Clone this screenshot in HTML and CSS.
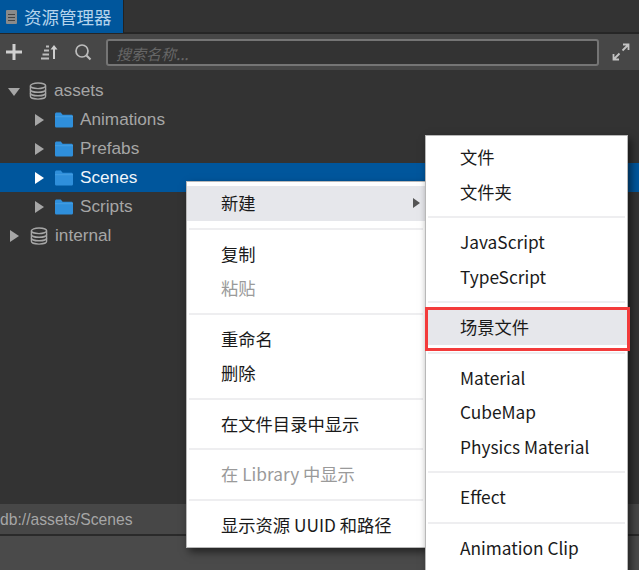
FILE: index.html
```html
<!DOCTYPE html>
<html lang="zh-CN">
<head>
    <meta charset="UTF-8">
    <title>资源管理器</title>
    <link rel="stylesheet" href="styles.css">
</head>
<body>
    <svg class="sprites" width="0" height="0">
        <symbol id="db" viewBox="0 0 18 18">
            <g fill="none" stroke="currentColor" stroke-width="1.4">
                <ellipse cx="9" cy="3.8" rx="7.6" ry="2.8"/>
                <path d="M1.4 3.8v10.4c0 1.6 3.4 2.9 7.6 2.9s7.6-1.3 7.6-2.9V3.8"/>
                <path d="M1.4 7.4c0 1.6 3.4 2.9 7.6 2.9s7.6-1.3 7.6-2.9"/>
                <path d="M1.4 10.9c0 1.6 3.4 2.9 7.6 2.9s7.6-1.3 7.6-2.9"/>
            </g>
        </symbol>
        <symbol id="folder" viewBox="0 0 18 16">
            <path fill="#2f8fdb" d="M0 2.2C0 1.2.7.5 1.6.5h4.2l1.8 2.2h8.8c.9 0 1.6.7 1.6 1.6v9.6c0 .9-.7 1.6-1.6 1.6H1.6C.7 15.5 0 14.8 0 13.900z"/>
            <path fill="#5aaee8" d="M0 4.300h18v.9H0z" opacity=".6"/>
        </symbol>
    </svg>

    <div class="panel">
        <div class="tabs">
            <div class="tab">
                <svg class="tab-icon" width="11" height="14" viewBox="0 0 11 14">
                    <path fill="#8a8a8a" d="M1 0h9a1 1 0 0 1 1 1v12a1 1 0 0 1-1 1H1a1 1 0 0 1-1-1V1a1 1 0 0 1 1-1z"/>
                    <path stroke="#444" stroke-width="1" d="M2 4.500h7M2 7.500h7M2 10.500h7"/>
                </svg>
                <span>资源管理器</span>
            </div>
        </div>

        <div class="toolbar">
            <svg class="tool" width="18" height="18" viewBox="0 0 18 18">
                <path stroke="#cfcfcf" stroke-width="3" d="M9 1v16M1 9h16"/>
            </svg>
            <svg class="tool" width="18" height="18" viewBox="0 0 18 18">
                <path stroke="#bdbdbd" stroke-width="2" d="M6 3.500h3M4 7.500h5M2.500 11.500h6.500M1 15.500h8"/>
                <path fill="#cfcfcf" d="M14 2l3.500 4.500H15V16h-2V6.500h-2.500z"/>
            </svg>
            <svg class="tool" width="18" height="18" viewBox="0 0 18 18">
                <circle cx="8" cy="8" r="6" fill="none" stroke="#bdbdbd" stroke-width="1.700"/>
                <path stroke="#bdbdbd" stroke-width="2.200" d="M12.500 12.500l4 4"/>
            </svg>
            <div class="search">搜索名称...</div>
            <svg class="expand" width="18" height="18" viewBox="0 0 18 18">
                <path fill="none" stroke="#c4c4c4" stroke-width="1.800" d="M10.500 7.500L16 2M11 1.500h5.500V7M7.500 10.500L2 16M1.500 11v5.500H7"/>
            </svg>
        </div>

        <ul class="tree">
            <li class="node">
                <i class="caret caret-open"></i>
                <svg class="db-icon"><use href="#db"/></svg>
                <span>assets</span>
            </li>
            <li class="node child">
                <i class="caret"></i>
                <svg class="folder-icon"><use href="#folder"/></svg>
                <span>Animations</span>
            </li>
            <li class="node child">
                <i class="caret"></i>
                <svg class="folder-icon"><use href="#folder"/></svg>
                <span>Prefabs</span>
            </li>
            <li class="node child selected">
                <i class="caret"></i>
                <svg class="folder-icon"><use href="#folder"/></svg>
                <span>Scenes</span>
            </li>
            <li class="node child">
                <i class="caret"></i>
                <svg class="folder-icon"><use href="#folder"/></svg>
                <span>Scripts</span>
            </li>
            <li class="node closed-root">
                <i class="caret"></i>
                <svg class="db-icon"><use href="#db"/></svg>
                <span>internal</span>
            </li>
        </ul>

        <div class="status">db://assets/Scenes</div>
        <div class="bottom"></div>
    </div>

    <div class="menu menu-main">
        <div class="item active">新建<i class="arrow"></i></div>
        <div class="sep"></div>
        <div class="item">复制</div>
        <div class="item disabled">粘贴</div>
        <div class="sep"></div>
        <div class="item">重命名</div>
        <div class="item">删除</div>
        <div class="sep"></div>
        <div class="item">在文件目录中显示</div>
        <div class="sep"></div>
        <div class="item disabled">在 Library 中显示</div>
        <div class="sep"></div>
        <div class="item">显示资源 UUID 和路径</div>
    </div>

    <div class="menu menu-sub">
        <div class="item">文件</div>
        <div class="item">文件夹</div>
        <div class="sep"></div>
        <div class="item">JavaScript</div>
        <div class="item">TypeScript</div>
        <div class="sep"></div>
        <div class="item active">场景文件</div>
        <div class="sep"></div>
        <div class="item">Material</div>
        <div class="item">CubeMap</div>
        <div class="item">Physics Material</div>
        <div class="sep"></div>
        <div class="item">Effect</div>
        <div class="sep"></div>
        <div class="item">Animation Clip</div>
    </div>

    <div class="callout"></div>
</body>
</html>
```

FILE: styles.css
```css
html, body {
    height: 100%;
}
body {
    margin: 0;
    overflow: hidden;
    position: relative;
    background: #4a4a4a;
    font-family: "Liberation Sans", "Noto Sans CJK SC", sans-serif;
}
.sprites {
    position: absolute;
}
.panel {
    display: flex;
    flex-direction: column;
    height: 100%;
}

/* tab strip */
.tabs {
    height: 34px;
    flex: none;
    display: flex;
    box-sizing: border-box;
    background: #333;
    border-bottom: 2px solid #262626;
}
.tab {
    width: 124px;
    height: 33px;
    display: flex;
    align-items: center;
    gap: 7px;
    padding-left: 6px;
    box-sizing: border-box;
    background: #00569c;
    border-right: 1px solid #222;
    color: #b5d4ec;
    font-size: 17.500px;
    font-family: "Noto Sans CJK SC", sans-serif;
}
.tab-icon {
    flex: none;
}

/* toolbar */
.toolbar {
    height: 36px;
    flex: none;
    display: flex;
    align-items: center;
    background: #474747;
    padding: 0 9px 0 5px;
    box-sizing: border-box;
}
.toolbar .tool {
    flex: none;
    margin-right: 17px;
}
.toolbar .tool:nth-child(2) {
    margin-right: 16px;
}
.toolbar .tool:nth-child(3) {
    margin-right: 14px;
}
.search {
    flex: 1;
    height: 27px;
    line-height: 25px;
    box-sizing: border-box;
    background: #333;
    border: 2px solid #757575;
    border-radius: 3px;
    padding-left: 8px;
    color: #666;
    font-size: 15px;
    font-style: italic;
    font-family: "Noto Sans CJK SC", sans-serif;
}
.expand {
    flex: none;
    margin-left: 13px;
}

/* tree */
.tree {
    flex: 1;
    margin: 0;
    padding: 6px 0 0;
    list-style: none;
    background: #333;
}
.node {
    height: 29px;
    display: flex;
    align-items: center;
    padding-left: 8px;
    color: #a6a6a6;
    font-size: 17.200px;
}
.node.child {
    padding-left: 35px;
}
.node.closed-root {
    padding-left: 10px;
}
.node.selected {
    background: #00569c;
    color: #f0f5fa;
}
.caret {
    width: 0;
    height: 0;
    flex: none;
    margin-right: 11px;
    border-left: 9px solid #a6a6a6;
    border-top: 6px solid transparent;
    border-bottom: 6px solid transparent;
}
.selected .caret {
    border-left-color: #fff;
}
.caret-open {
    margin: 2px 9px 0 0;
    border-top: 8px solid #a6a6a6;
    border-bottom: 0;
    border-left: 6px solid transparent;
    border-right: 6px solid transparent;
}
.db-icon {
    width: 18px;
    height: 18px;
    flex: none;
    margin-right: 7px;
    color: #a6a6a6;
}
.folder-icon {
    width: 18px;
    height: 16px;
    flex: none;
    margin-right: 7px;
}

/* status */
.status {
    height: 32px;
    flex: none;
    line-height: 31px;
    box-sizing: border-box;
    background: #474747;
    border-bottom: 2px solid #2a2a2a;
    color: #a6a6a6;
    font-size: 15.700px;
}
.bottom {
    height: 34px;
    flex: none;
    background: #4a4a4a;
}

/* context menus */
.menu {
    position: absolute;
    box-sizing: border-box;
    background: #fff;
    border: 1px solid #b8b8b8;
    padding: 4px 0 5px;
    box-shadow: 3px 4px 8px rgba(0, 0, 0, 0.55);
    color: #1a1a1a;
    font-family: "Noto Sans CJK SC", "Liberation Sans", sans-serif;
    font-size: 17.300px;
}
.menu-main {
    left: 186px;
    top: 181px;
    width: 240px;
}
.menu-sub {
    left: 425px;
    top: 135px;
    width: 203px;
    height: 440px;
}
.item {
    height: 34.500px;
    line-height: 34px;
    padding-left: 34px;
    position: relative;
    white-space: nowrap;
}
.item.active {
    background: #e6e7eb;
}
.item.disabled {
    color: #9a9a9a;
}
.arrow {
    position: absolute;
    right: 5px;
    top: 12px;
    width: 0;
    height: 0;
    border-left: 7px solid #555;
    border-top: 5px solid transparent;
    border-bottom: 5px solid transparent;
}
.sep {
    height: 16px;
    position: relative;
}
.sep::after {
    content: "";
    position: absolute;
    left: 2px;
    right: 2px;
    top: 7px;
    height: 2px;
    background: #eeeef0;
}
.callout {
    position: absolute;
    left: 425px;
    top: 307px;
    width: 205px;
    height: 44px;
    box-sizing: border-box;
    border: 3px solid #f33b3b;
}
```
